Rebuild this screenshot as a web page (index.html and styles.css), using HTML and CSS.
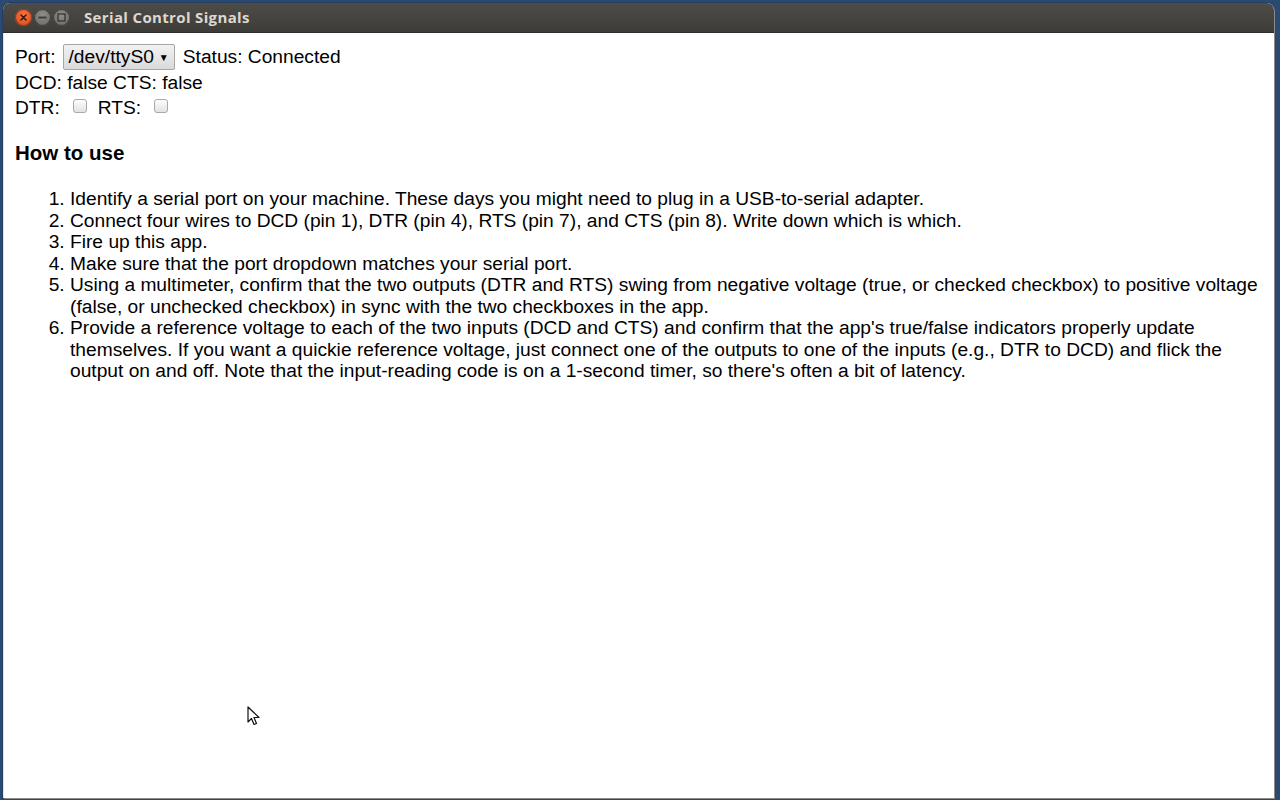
FILE: index.html
```html
<!DOCTYPE html>
<html>
<head>
<meta charset="utf-8">
<title>Serial Control Signals</title>
<link rel="stylesheet" href="styles.css">
</head>
<body>
<div class="window">
  <div class="titlebar">
    <div class="controls">
      <span class="btn close"><svg width="17" height="17" viewBox="0 0 17 17"><path d="M6 6 L11 11 M11 6 L6 11" stroke="#3a1a0e" stroke-width="1.6" stroke-linecap="round"/></svg></span>
      <span class="btn"><svg width="17" height="17" viewBox="0 0 17 17"><path d="M4.5 8.5 H12.5" stroke="#3a3a37" stroke-width="1.8"/></svg></span>
      <span class="btn"><svg width="17" height="17" viewBox="0 0 17 17"><rect x="5" y="5" width="7" height="7" fill="none" stroke="#3a3a37" stroke-width="1.4"/></svg></span>
    </div>
    <div class="title">Serial Control Signals</div>
  </div>
  <div class="content">
    <div class="row row-port">
      <span>Port:</span>
      <span class="select"><span class="select-text">/dev/ttyS0</span><span class="arrow">▼</span></span>
      <span>Status: Connected</span>
    </div>
    <div class="row row-inputs">DCD: false CTS: false</div>
    <div class="row row-outputs">
      <span>DTR:</span><span class="check"></span>
      <span>RTS:</span><span class="check"></span>
    </div>
    <h3 class="heading">How to use</h3>
    <ol class="steps">
      <li>Identify a serial port on your machine. These days you might need to plug in a USB-to-serial adapter.</li>
      <li>Connect four wires to DCD (pin 1), DTR (pin 4), RTS (pin 7), and CTS (pin 8). Write down which is which.</li>
      <li>Fire up this app.</li>
      <li>Make sure that the port dropdown matches your serial port.</li>
      <li>Using a multimeter, confirm that the two outputs (DTR and RTS) swing from negative voltage (true, or checked checkbox) to positive voltage (false, or unchecked checkbox) in sync with the two checkboxes in the app.</li>
      <li>Provide a reference voltage to each of the two inputs (DCD and CTS) and confirm that the app's true/false indicators properly update themselves. If you want a quickie reference voltage, just connect one of the outputs to one of the inputs (e.g., DTR to DCD) and flick the output on and off. Note that the input-reading code is on a 1-second timer, so there's often a bit of latency.</li>
    </ol>
  </div>
  <svg class="cursor" width="14" height="22" viewBox="0 0 14 22"><path d="M1 1 L1 16 L4.5 12.5 L7 18.5 L9.5 17.5 L7 11.5 L12 11.5 Z" fill="#fff" stroke="#111" stroke-width="1.2" stroke-linejoin="round"/></svg>
</div>
</body>
</html>
```
FILE: styles.css
```css
html, body {
  margin: 0;
  padding: 0;
  height: 100%;
}
body {
  background: #2b4a73;
  overflow: hidden;
}
.window {
  position: relative;
  margin: 3px 0 0 3px;
  width: 1271px;
  height: 795px;
  display: flex;
  flex-direction: column;
  background: #fff;
  border-radius: 7px 7px 0 0;
  box-shadow: 1px 1px 0 #8a8a86, 0 0 0 1px rgba(0,0,0,0.15);
}
.titlebar {
  height: 29px;
  flex: none;
  display: flex;
  align-items: center;
  border-radius: 7px 7px 0 0;
  background: linear-gradient(#4e4c47, #3d3c38);
  border-bottom: 1px solid #2e2d2a;
}
.controls {
  display: flex;
  gap: 2px;
  margin-left: 12px;
}
.btn {
  width: 17px;
  height: 17px;
  border-radius: 50%;
  background: radial-gradient(circle at 50% 35%, #8e8d88, #65645f);
  box-shadow: inset 0 0 0 1px #3c3b37;
  display: flex;
}
.btn.close {
  background: radial-gradient(circle at 50% 35%, #f5753d, #d9461a);
  box-shadow: inset 0 0 0 1px #8c3a1c;
}
.title {
  margin-left: 14px;
  margin-top: -1px;
  font-family: "Open Sans", "DejaVu Sans", sans-serif;
  font-weight: 700;
  font-size: 15px;
  color: #dcd8cf;
  letter-spacing: 0.35px;
}
.content {
  flex: 1;
  padding: 11px 11px 0 11px;
  font-family: "Liberation Sans", Arial, sans-serif;
  font-size: 19.2px;
  color: #000;
  border-left: 1px solid #e6e6e6;
}
.row {
  display: flex;
  align-items: center;
  gap: 5px;
}
.row-port {
  height: 26px;
}
.row-inputs {
  height: 25px;
}
.row-outputs {
  height: 25px;
}
.select {
  display: inline-flex;
  align-items: center;
  height: 24px;
  padding: 0 5px 0 5px;
  border: 1px solid #a6a6a6;
  border-radius: 2px;
  background: linear-gradient(#f2f2f2, #dadada);
  margin: 0 3px 0 2px;
}
.arrow {
  font-size: 10px;
  margin-left: 5px;
  margin-top: 1px;
}
.check {
  width: 12px;
  height: 12px;
  border: 1px solid #a9a9a9;
  border-radius: 3px;
  background: linear-gradient(#fdfdfd, #e2e2e2);
  margin: -4px 6px 0 8px;
}
.heading {
  font-size: 20.5px;
  font-weight: 700;
  margin: 20px 0 0 0;
  line-height: 26px;
}
.steps {
  margin: 22px 0 0 0;
  padding-left: 55px;
  line-height: 21.5px;
}
.cursor {
  position: absolute;
  left: 244px;
  top: 703px;
}
```
